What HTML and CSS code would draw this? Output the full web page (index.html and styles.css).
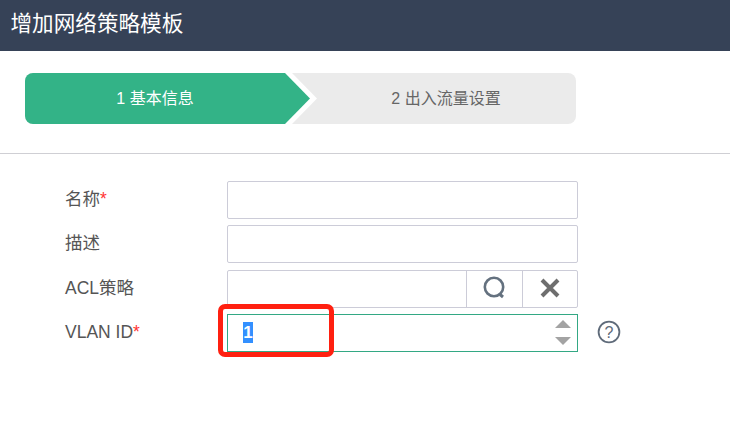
FILE: index.html
```html
<!DOCTYPE html>
<html>
<head>
    <title>增加网络策略模板</title>
    <link rel="stylesheet" href="styles.css">
</head>
<body>
    <div class="page-header">增加网络策略模板</div>

    <div class="steps">
        <div class="step step-active">1 基本信息</div>
        <div class="step step-next">2 出入流量设置</div>
    </div>

    <form class="form">
        <label class="form-label">名称<span class="required">*</span></label>
        <input class="field" type="text">

        <label class="form-label">描述</label>
        <input class="field" type="text">

        <label class="form-label form-label-low">ACL策略</label>
        <div class="field field-group">
            <div class="field-text"></div>
            <div class="field-btn">
                <svg width="26" height="26" viewBox="0 0 26 26">
                    <circle cx="12" cy="12" r="9.2" fill="none" stroke="#64717f" stroke-width="2.6"></circle>
                    <path d="M18 19.5l3 2.5" fill="none" stroke="#64717f" stroke-width="3"></path>
                </svg>
            </div>
            <div class="field-btn">
                <svg width="20" height="20" viewBox="0 0 20 20">
                    <path d="M2 2l16 16M18 2L2 18" fill="none" stroke="#6e6e6e" stroke-width="4"></path>
                </svg>
            </div>
        </div>

        <label class="form-label form-label-low">VLAN ID<span class="required">*</span></label>
        <div class="number-row">
            <div class="field field-number">
                <span class="selected">1</span>
                <div class="spinner">
                    <span class="arrow-up"></span>
                    <span class="arrow-down"></span>
                </div>
            </div>
            <svg class="help" width="24" height="24" viewBox="0 0 24 24">
                <circle cx="12" cy="12" r="10.4" fill="none" stroke="#5f6b7a" stroke-width="1.8"></circle>
                <text x="12" y="17.5" text-anchor="middle" class="help-mark">?</text>
            </svg>
            <div class="callout"></div>
        </div>
    </form>
</body>
</html>
```

FILE: styles.css
```css
body {
    margin: 0;
    background-color: #fff;
    font-family: "Liberation Sans", "Noto Sans CJK SC", sans-serif;
    color: #555;
}

.page-header {
    height: 51px;
    line-height: 47px;
    padding-left: 10.5px;
    background-color: #364257;
    color: #fff;
    font-size: 21.6px;
}

.steps {
    display: flex;
    width: 551px;
    height: 51px;
    margin: 22px 0 0 25px;
    background-color: #ebebeb;
    border-radius: 8px;
}

.step {
    position: relative;
    line-height: 51px;
    text-align: center;
    font-size: 16px;
    color: #666;
}

.step-active {
    flex: 0 0 260px;
    background-color: #33b387;
    border-radius: 8px 0 0 8px;
    color: #fff;
}

.step-next {
    flex: 1;
    padding-left: 31px;
}

/* white edge first, green arrow head on top of it */
.step-active::before,
.step-active::after {
    content: "";
    position: absolute;
    top: 0;
    left: 100%;
    height: 51px;
    z-index: 1;
}

.step-active::before {
    width: 32px;
    background-color: #fff;
    clip-path: polygon(0 0, 7px 0, 100% 50%, 7px 100%, 0 100%);
}

.step-active::after {
    width: 25px;
    background-color: #33b387;
    clip-path: polygon(0 0, 100% 50%, 0 100%);
}

.form {
    display: grid;
    grid-template-columns: 162px 351px;
    row-gap: 6.33px;
    align-items: center;
    margin-top: 29px;
    padding: 27px 0 40px 65px;
    border-top: 1px solid #cfcfd4;
}

.form-label {
    padding-bottom: 3px;
    line-height: 20px;
    font-size: 17.5px;
    color: #555;
}

.form-label-low {
    padding-bottom: 1px;
}

.required {
    color: #f33;
}

.field {
    box-sizing: border-box;
    width: 351px;
    height: 38px;
    margin: 0;
    padding: 0;
    background-color: #fff;
    border: 1px solid #ccccd8;
    border-radius: 2px;
}

.field-group {
    display: flex;
}

.field-text {
    flex: 1;
}

.field-btn {
    display: flex;
    align-items: center;
    justify-content: center;
    width: 55px;
    padding-bottom: 2px;
    border-left: 1px solid #ccccd8;
}

.field-btn + .field-btn {
    width: 54px;
}

.number-row {
    position: relative;
    display: flex;
    align-items: center;
}

.field-number {
    display: flex;
    align-items: center;
    justify-content: space-between;
    flex-shrink: 0;
    padding: 0 6px 0 15px;
    border-color: #33a884;
    border-radius: 0;
}

.selected {
    width: 10px;
    line-height: 21px;
    background-color: #3390ff;
    color: #fff;
    font-size: 17px;
    font-weight: bold;
    text-align: center;
}

.spinner {
    display: flex;
    flex-direction: column;
    gap: 9px;
}

.arrow-up,
.arrow-down {
    width: 0;
    height: 0;
    border-left: 8px solid transparent;
    border-right: 8px solid transparent;
}

.arrow-up {
    border-bottom: 8px solid #a3a3a3;
}

.arrow-down {
    border-top: 8px solid #a3a3a3;
}

.help {
    flex-shrink: 0;
    margin: -2px 0 0 19px;
}

.help-mark {
    font-size: 16px;
    fill: #5f6b7a;
}

/* red annotation drawn over the field */
.callout {
    position: absolute;
    top: -10px;
    left: -9px;
    box-sizing: border-box;
    width: 116px;
    height: 53px;
    border: 5px solid #ff2010;
    border-radius: 7px;
}
```
